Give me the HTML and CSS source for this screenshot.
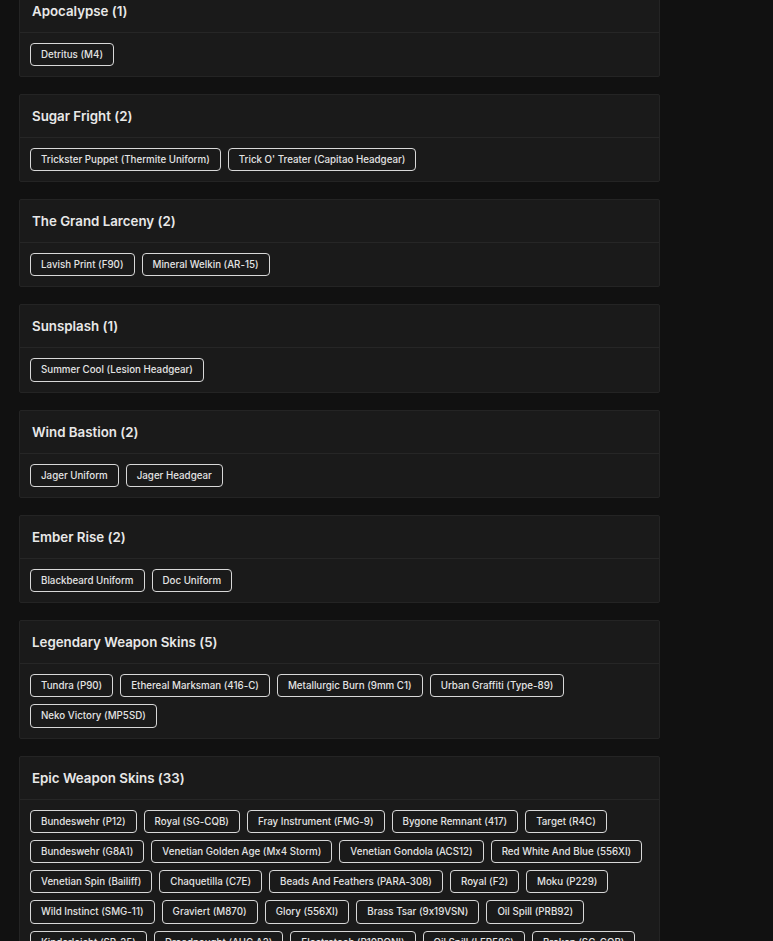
FILE: index.html
```html
<!DOCTYPE html>
<html>
<head>
<meta charset="utf-8">
<link rel="stylesheet" href="styles.css">
</head>
<body>
<main class="list">
  <section class="card">
    <h2 class="card-title">Apocalypse (1)</h2>
    <div class="chips">
      <span class="chip">Detritus (M4)</span>
    </div>
  </section>
  <section class="card">
    <h2 class="card-title">Sugar Fright (2)</h2>
    <div class="chips">
      <span class="chip">Trickster Puppet (Thermite Uniform)</span>
      <span class="chip">Trick O' Treater (Capitao Headgear)</span>
    </div>
  </section>
  <section class="card">
    <h2 class="card-title">The Grand Larceny (2)</h2>
    <div class="chips">
      <span class="chip">Lavish Print (F90)</span>
      <span class="chip">Mineral Welkin (AR-15)</span>
    </div>
  </section>
  <section class="card">
    <h2 class="card-title">Sunsplash (1)</h2>
    <div class="chips">
      <span class="chip">Summer Cool (Lesion Headgear)</span>
    </div>
  </section>
  <section class="card">
    <h2 class="card-title">Wind Bastion (2)</h2>
    <div class="chips">
      <span class="chip">Jager Uniform</span>
      <span class="chip">Jager Headgear</span>
    </div>
  </section>
  <section class="card">
    <h2 class="card-title">Ember Rise (2)</h2>
    <div class="chips">
      <span class="chip">Blackbeard Uniform</span>
      <span class="chip">Doc Uniform</span>
    </div>
  </section>
  <section class="card">
    <h2 class="card-title">Legendary Weapon Skins (5)</h2>
    <div class="chips">
      <span class="chip">Tundra (P90)</span>
      <span class="chip">Ethereal Marksman (416-C)</span>
      <span class="chip">Metallurgic Burn (9mm C1)</span>
      <span class="chip">Urban Graffiti (Type-89)</span>
      <span class="chip">Neko Victory (MP5SD)</span>
    </div>
  </section>
  <section class="card">
    <h2 class="card-title">Epic Weapon Skins (33)</h2>
    <div class="chips">
      <span class="chip">Bundeswehr (P12)</span>
      <span class="chip">Royal (SG-CQB)</span>
      <span class="chip">Fray Instrument (FMG-9)</span>
      <span class="chip">Bygone Remnant (417)</span>
      <span class="chip">Target (R4C)</span>
      <span class="chip">Bundeswehr (G8A1)</span>
      <span class="chip">Venetian Golden Age (Mx4 Storm)</span>
      <span class="chip">Venetian Gondola (ACS12)</span>
      <span class="chip">Red White And Blue (556XI)</span>
      <span class="chip">Venetian Spin (Bailiff)</span>
      <span class="chip">Chaquetilla (C7E)</span>
      <span class="chip">Beads And Feathers (PARA-308)</span>
      <span class="chip">Royal (F2)</span>
      <span class="chip">Moku (P229)</span>
      <span class="chip">Wild Instinct (SMG-11)</span>
      <span class="chip">Graviert (M870)</span>
      <span class="chip">Glory (556XI)</span>
      <span class="chip">Brass Tsar (9x19VSN)</span>
      <span class="chip">Oil Spill (PRB92)</span>
      <span class="chip">Kinderleicht (SR-25)</span>
      <span class="chip">Dreadnought (AUG A2)</span>
      <span class="chip">Electrotech (P10RONI)</span>
      <span class="chip">Oil Spill (LFP586)</span>
      <span class="chip">Broken (SC-CQB)</span>
    </div>
  </section>
</main>
</body>
</html>
```
FILE: styles.css
```css
html, body {
  margin: 0;
  padding: 0;
  background: #111111;
}
body {
  font-family: Inter, "Noto Sans", sans-serif;
  font-feature-settings: "calt" 0;
  color: #e6e6e6;
}
.list {
  display: flex;
  flex-direction: column;
  gap: 17px;
  width: 641px;
  margin: -11.5px 0 0 19px;
}
.card {
  background: #1a1a1a;
  border: 1px solid #242424;
  border-radius: 2px;
}
.card-title {
  margin: 0;
  height: 42px;
  display: flex;
  align-items: center;
  padding: 0 12px;
  font-size: 13.3px;
  font-weight: 600;
  color: #e8e8e8;
  border-bottom: 1px solid #262626;
}
.chips {
  display: flex;
  flex-wrap: wrap;
  gap: 7px 7px;
  padding: 10px;
}
.chip {
  display: inline-block;
  border: 1px solid #d8d8d8;
  border-radius: 4px;
  padding: 3px 10px;
  font-size: 9.75px;
  line-height: 15.25px;
  color: #e4e4e4;
  font-weight: 500;
  white-space: nowrap;
}
```
